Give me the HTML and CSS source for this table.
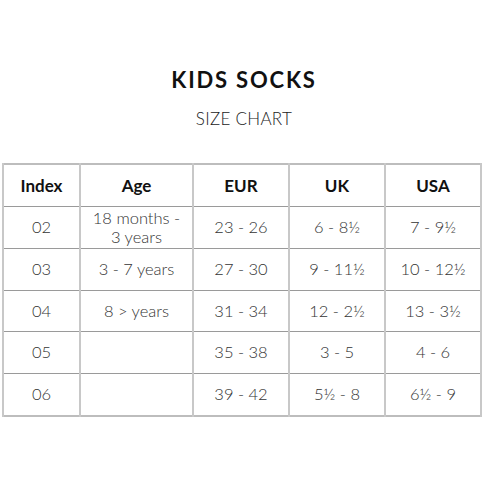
FILE: index.html
```html
<!DOCTYPE html>
<html>
<head>
<meta charset="utf-8">
<link rel="stylesheet" href="styles.css">
</head>
<body>
<div class="page">
  <h1 class="title">KIDS SOCKS</h1>
  <p class="subtitle">SIZE CHART</p>
  <table class="chart">
    <colgroup>
      <col class="c-index"><col class="c-age"><col class="c-size"><col class="c-size"><col class="c-size">
    </colgroup>
    <thead>
      <tr><th>Index</th><th>Age</th><th>EUR</th><th>UK</th><th>USA</th></tr>
    </thead>
    <tbody>
      <tr><td>02</td><td class="two">18 months -<br>3 years</td><td>23 - 26</td><td>6 - 8½</td><td>7 - 9½</td></tr>
      <tr><td>03</td><td>3 - 7 years</td><td>27 - 30</td><td>9 - 11½</td><td>10 - 12½</td></tr>
      <tr><td>04</td><td>8 &gt; years</td><td>31 - 34</td><td>12 - 2½</td><td>13 - 3½</td></tr>
      <tr><td>05</td><td></td><td>35 - 38</td><td>3 - 5</td><td>4 - 6</td></tr>
      <tr><td>06</td><td></td><td>39 - 42</td><td>5½ - 8</td><td>6½ - 9</td></tr>
    </tbody>
  </table>
</div>
</body>
</html>
```
FILE: styles.css
```css
html, body {
  margin: 0;
  padding: 0;
  background: #fff;
}
.page {
  width: 488px;
  height: 488px;
  font-family: Lato, "Open Sans", sans-serif;
  color: #222;
  padding-top: 68px;
  box-sizing: border-box;
}
.title {
  margin: 0;
  text-align: center;
  font-size: 22px;
  font-weight: 700;
  line-height: 24px;
  letter-spacing: 1.8px;
  color: #111;
}
.subtitle {
  margin: 17px 0 0 0;
  text-align: center;
  font-size: 17px;
  font-weight: 300;
  line-height: 20px;
  letter-spacing: 0.3px;
  color: #222;
}
.chart {
  margin: 34px 0 0 2px;
  width: 480px;
  border-collapse: collapse;
  table-layout: fixed;
  border: 2px solid #bdbdbd;
}
.c-index { width: 77px; }
.c-age { width: 113px; }
.c-size { width: 96px; }
.chart th, .chart td {
  height: 40.6px;
  padding: 0;
  text-align: center;
  vertical-align: middle;
  border-left: 2px solid #c8c8c8;
  border-right: 2px solid #c8c8c8;
  border-top: 1px solid #9a9a9a;
  border-bottom: 1px solid #9a9a9a;
}
.chart th {
  font-size: 17px;
  font-weight: 700;
  color: #111;
}
.chart td {
  font-size: 16.5px;
  font-weight: 300;
  color: #333;
  line-height: 19px;
}
.chart td.two {
  line-height: 19px;
  padding-top: 1px;
}
```
